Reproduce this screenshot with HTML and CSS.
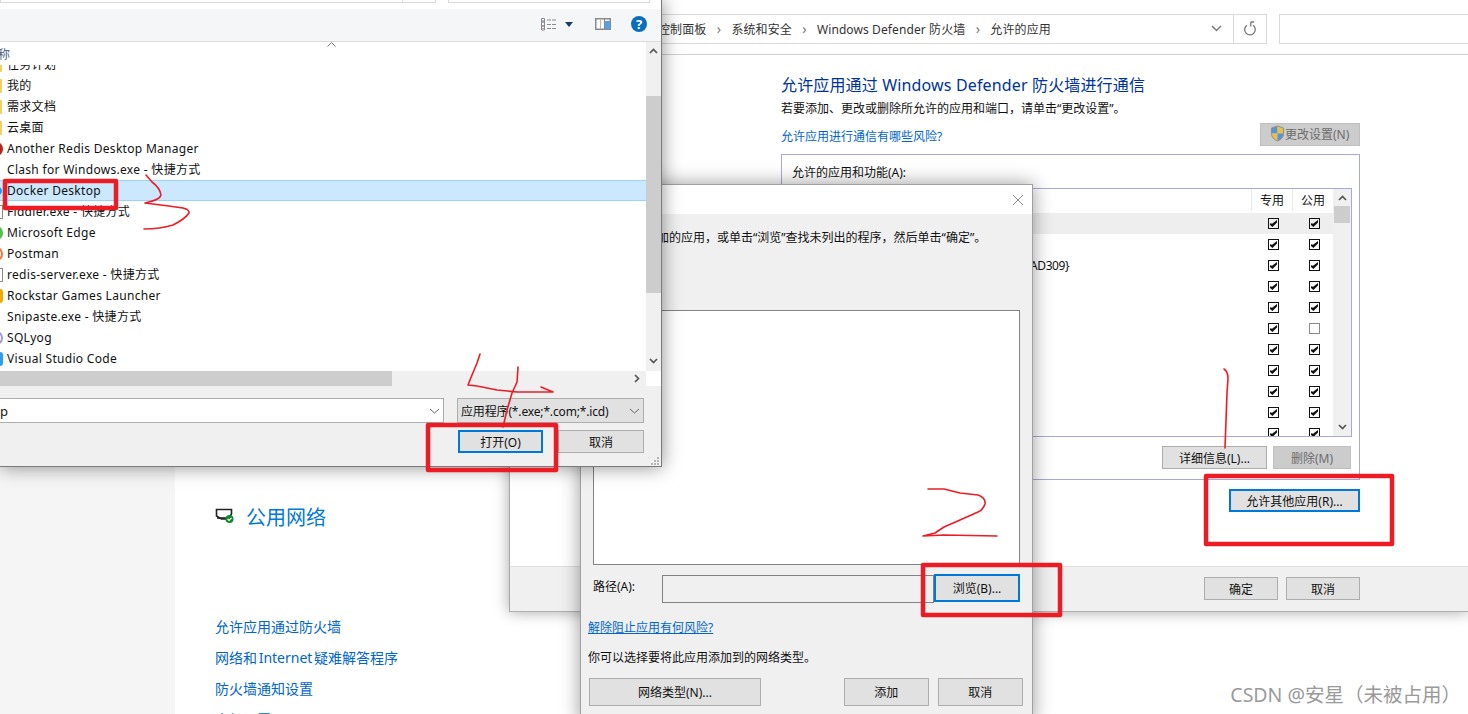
FILE: index.html
```html
<!DOCTYPE html>
<html lang="zh-CN">
<head>
  <meta charset="UTF-8">
  <title>允许的应用</title>
  <link rel="stylesheet" href="styles.css">
</head>
<body>
<div class="desktop">

  <!-- firewall page, furthest back -->
  <div class="window firewall">
    <div class="rail"></div>
    <div class="firewall-main">
      <div class="network-title">
        <svg class="network-icon" width="20" height="16" viewBox="0 0 20 16">
          <path d="M1.5 1.5h15v4.5l-3 5h-7l-5-3z" fill="#fff" stroke="#222" stroke-width="1.6"/>
          <path d="M2 10h9" stroke="#222" stroke-width="1.6"/>
          <circle cx="14.5" cy="11" r="4" fill="#12892f"/>
          <path d="M12.6 11l1.5 1.5 2.4-2.6" fill="none" stroke="#fff" stroke-width="1.2"/>
        </svg>
        <span>公用网络</span>
      </div>
      <ul class="firewall-links">
        <li>允许应用通过防火墙</li>
        <li>网络和 Internet 疑难解答程序</li>
        <li>防火墙通知设置</li>
        <li>高级设置</li>
      </ul>
    </div>
  </div>

  <!-- allowed apps window -->
  <div class="window allowed">
    <div class="addressbar">
      <div class="crumbs">
        <span>控制面板</span><i>›</i>
        <span>系统和安全</span><i>›</i>
        <span>Windows Defender 防火墙</span><i>›</i>
        <span>允许的应用</span>
        <svg class="crumbs-caret" width="11" height="7" viewBox="0 0 11 7"><path d="M1 1l4.5 4.5L10 1" fill="none" stroke="#777" stroke-width="1.4"/></svg>
        <div class="refresh">
          <svg width="14" height="16" viewBox="0 0 14 16"><path d="M4 4.2A5.3 5.3 0 1 0 10 4.2" fill="none" stroke="#777" stroke-width="1.3"/><path d="M7.8 1v4.5M7.8 1H11" fill="none" stroke="#777" stroke-width="1.3"/></svg>
        </div>
      </div>
      <div class="searchbox"></div>
    </div>

    <div class="allowed-body">
      <h2 class="allowed-title">允许应用通过 Windows Defender 防火墙进行通信</h2>
      <p class="allowed-sub">若要添加、更改或删除所允许的应用和端口，请单击“更改设置”。</p>
      <div class="risk-row">
        <a class="link risk-link">允许应用进行通信有哪些风险?</a>
        <button class="btn btn-off btn-shield">
          <svg width="15" height="17" viewBox="0 0 15 17">
            <path d="M7.5 1L1.500 3v5.500h6z" fill="#5b93cc"/>
            <path d="M7.5 1l6 2v5.500h-6z" fill="#e6bf4c"/>
            <path d="M1.500 8.500c0 3.500 2.500 6 6 7.500V8.500z" fill="#e6bf4c"/>
            <path d="M13.500 8.500c0 3.500-2.500 6-6 7.500V8.500z" fill="#5b93cc"/>
            <path d="M7.5 1L1.500 3v5.500c0 3.500 2.500 6 6 7.500 3.500-1.500 6-4 6-7.500V3z" fill="none" stroke="#8f8f8f"/>
          </svg>更改设置(N)
        </button>
      </div>
      <div class="groupbox">
        <div class="group-label">允许的应用和功能(A):</div>
        <div class="applist">
          <div class="applist-rows">
            <div class="app-head"><span class="app-name"></span><span class="app-col">专用</span><span class="app-col">公用</span></div>
            <div class="app-row app-row-hot"><span class="app-name"></span><span class="app-col"><b class="check"></b></span><span class="app-col"><b class="check"></b></span></div>
            <div class="app-row"><span class="app-name"></span><span class="app-col"><b class="check"></b></span><span class="app-col"><b class="check"></b></span></div>
            <div class="app-row"><span class="app-name">AD309}</span><span class="app-col"><b class="check"></b></span><span class="app-col"><b class="check"></b></span></div>
            <div class="app-row"><span class="app-name"></span><span class="app-col"><b class="check"></b></span><span class="app-col"><b class="check"></b></span></div>
            <div class="app-row"><span class="app-name"></span><span class="app-col"><b class="check"></b></span><span class="app-col"><b class="check"></b></span></div>
            <div class="app-row"><span class="app-name"></span><span class="app-col"><b class="check"></b></span><span class="app-col"><b class="check check-empty"></b></span></div>
            <div class="app-row"><span class="app-name"></span><span class="app-col"><b class="check"></b></span><span class="app-col"><b class="check"></b></span></div>
            <div class="app-row"><span class="app-name"></span><span class="app-col"><b class="check"></b></span><span class="app-col"><b class="check"></b></span></div>
            <div class="app-row"><span class="app-name"></span><span class="app-col"><b class="check"></b></span><span class="app-col"><b class="check"></b></span></div>
            <div class="app-row"><span class="app-name"></span><span class="app-col"><b class="check"></b></span><span class="app-col"><b class="check"></b></span></div>
            <div class="app-row"><span class="app-name"></span><span class="app-col"><b class="check"></b></span><span class="app-col"><b class="check"></b></span></div>
          </div>
          <div class="vscroll vscroll-app">
            <svg width="9" height="6" viewBox="0 0 9 6"><path d="M1 5l3.500-3.500L8 5" fill="none" stroke="#555" stroke-width="1.700"/></svg>
            <div class="thumb thumb-app"></div>
            <svg class="arrow-end" width="9" height="6" viewBox="0 0 9 6"><path d="M1 1l3.500 3.500L8 1" fill="none" stroke="#555" stroke-width="1.700"/></svg>
          </div>
        </div>
        <div class="group-actions">
          <button class="btn btn-detail">详细信息(L)...</button>
          <button class="btn btn-off btn-remove">删除(M)</button>
        </div>
      </div>
      <div class="other-row"><button class="btn btn-default btn-other">允许其他应用(R)...</button></div>
    </div>

    <div class="allowed-foot">
      <button class="btn btn-foot">确定</button>
      <button class="btn btn-foot">取消</button>
    </div>
  </div>

  <!-- add an app dialog -->
  <div class="window addapp">
    <div class="addapp-head">
      <svg width="12" height="12" viewBox="0 0 12 12"><path d="M1 1l10 10M11 1L1 11" stroke="#8c8c8c" stroke-width="1"/></svg>
    </div>
    <div class="addapp-body">
      <p class="addapp-intro">请选择要添加的应用，或单击“浏览”查找未列出的程序，然后单击“确定”。</p>
      <div class="addapp-list"></div>
      <div class="path-row">
        <label class="path-label">路径(A):</label>
        <div class="path-input"></div>
        <button class="btn btn-default btn-browse">浏览(B)...</button>
      </div>
      <a class="link link-under">解除阻止应用有何风险?</a>
      <p class="addapp-note">你可以选择要将此应用添加到的网络类型。</p>
      <div class="addapp-actions">
        <button class="btn btn-net">网络类型(N)...</button>
        <button class="btn btn-add">添加</button>
        <button class="btn btn-add">取消</button>
      </div>
    </div>
  </div>

  <!-- file open dialog, in front -->
  <div class="window opener">
    <div class="opener-top">
      <div class="opener-path"><span class="opener-path-end"></span></div>
      <div class="opener-search"></div>
    </div>
    <div class="opener-tools">
      <svg width="16" height="13" viewBox="0 0 16 13">
        <g fill="none" stroke="#8a8a8a">
          <path d="M.5 .5h3v3.500h-3zM.5 4h3v4h-3zM.5 8h3v4h-3z"/>
          <path d="M6 2h9M6 6.500h9M6 10.500h9" stroke-dasharray="4 1"/>
        </g>
        <path d="M1.500 2h1v1h-1z" fill="#4a7fc0"/>
        <path d="M1.500 10h1v1h-1z" fill="#c0392b"/>
      </svg>
      <svg class="tool-caret" width="8" height="5" viewBox="0 0 8 5"><path d="M0 0h8L4 5z" fill="#1f3a5f"/></svg>
      <svg class="tool-pane" width="16" height="12" viewBox="0 0 16 12">
        <rect x=".75" y=".75" width="14.500" height="10.500" fill="#fff" stroke="#8a8a8a" stroke-width="1.500"/>
        <path d="M5.500 1v10" stroke="#b5b5b5"/>
        <path d="M9.500 1v10" stroke="#8a8a8a"/>
        <rect x="10" y="3" width="5" height="8" fill="#4fa3e6"/>
      </svg>
      <span class="tool-help">?</span>
    </div>
    <div class="opener-main">
      <div class="opener-files">
        <div class="file-head">
          <span class="file-head-name">称</span>
          <svg class="sort-caret" width="9" height="5" viewBox="0 0 9 5"><path d="M.5 4.500l4-4 4 4" fill="none" stroke="#777"/></svg>
        </div>
        <div class="file-rows">
          <div class="file-row file-row-cut"><i class="ico ico-folder"></i>任务计划</div>
          <div class="file-row"><i class="ico ico-folder"></i>我的</div>
          <div class="file-row"><i class="ico ico-folder"></i>需求文档</div>
          <div class="file-row"><i class="ico ico-folder"></i>云桌面</div>
          <div class="file-row"><i class="ico ico-rdm"></i>Another Redis Desktop Manager</div>
          <div class="file-row"><i class="ico"></i>Clash for Windows.exe - 快捷方式</div>
          <div class="file-row file-row-on"><i class="ico ico-docker"></i>Docker Desktop</div>
          <div class="file-row"><i class="ico ico-doc"></i>Fiddler.exe - 快捷方式</div>
          <div class="file-row"><i class="ico ico-edge"></i>Microsoft Edge</div>
          <div class="file-row"><i class="ico ico-postman"></i>Postman</div>
          <div class="file-row"><i class="ico ico-doc"></i>redis-server.exe - 快捷方式</div>
          <div class="file-row"><i class="ico ico-rockstar"></i>Rockstar Games Launcher</div>
          <div class="file-row"><i class="ico"></i>Snipaste.exe - 快捷方式</div>
          <div class="file-row"><i class="ico ico-sqlyog"></i>SQLyog</div>
          <div class="file-row"><i class="ico ico-vscode"></i>Visual Studio Code</div>
        </div>
      </div>
      <div class="vscroll vscroll-files">
        <svg width="9" height="6" viewBox="0 0 9 6"><path d="M1 5l3.500-3.500L8 5" fill="none" stroke="#555" stroke-width="1.700"/></svg>
        <div class="thumb thumb-files"></div>
        <svg class="arrow-end" width="9" height="6" viewBox="0 0 9 6"><path d="M1 1l3.500 3.500L8 1" fill="none" stroke="#555" stroke-width="1.700"/></svg>
      </div>
    </div>
    <div class="hscroll-row">
      <div class="hscroll">
        <div class="hthumb"></div>
        <svg width="6" height="9" viewBox="0 0 6 9"><path d="M1 1l3.500 3.500L1 8" fill="none" stroke="#555" stroke-width="1.700"/></svg>
      </div>
    </div>
    <div class="opener-foot">
      <div class="combo-row">
        <div class="combo combo-name">p<svg width="11" height="6" viewBox="0 0 11 6"><path d="M1 1l4.500 4L10 1" fill="none" stroke="#666"/></svg></div>
        <div class="combo combo-type"><span class="combo-type-text">应用程序(*.exe;*.com;*.icd)</span><svg width="11" height="6" viewBox="0 0 11 6"><path d="M1 1l4.500 4L10 1" fill="none" stroke="#666"/></svg></div>
      </div>
      <div class="opener-actions">
        <button class="btn btn-default btn-open">打开(O)</button>
        <button class="btn btn-cancel">取消</button>
      </div>
      <svg class="grip" width="9" height="8" viewBox="0 0 9 8"><path d="M6 0h2v2H6zM3 3h2v2H3zM6 3h2v2H6zM0 6h2v2H0zM3 6h2v2H3zM6 6h2v2H6z" fill="#b5b5b5"/></svg>
    </div>
  </div>

  <!-- hand-drawn annotations on top of the screenshot -->
  <svg class="marks" width="1468" height="714" viewBox="0 0 1468 714">
    <g fill="none" stroke="#ed1c24" stroke-linejoin="round" stroke-linecap="round">
      <g stroke-width="4.500">
        <rect x="5" y="181" width="111" height="27"/>
        <rect x="428" y="425" width="128" height="45"/>
        <rect x="923" y="565" width="137" height="50"/>
        <rect x="1206" y="476" width="186" height="68"/>
      </g>
      <g stroke-width="1.600">
        <path d="M146 175L152 182Q160 188 161 195Q160 200 145 203Q170 206 183 208Q190 210 189 213Q185 219 173 225Q160 229 144 229"/>
        <path d="M480 354L477 363L472 375L468 385L477 386L497 390L517 392L553 392M541 387L553 392"/>
        <path d="M518 367L517 382L512 393L507 410L503 427"/>
        <path d="M1224 369Q1228 372 1228 378L1227 393L1226 420L1225 448"/>
        <path d="M928 489L944 489L960 493L978 495Q986 498 985 504Q983 510 978 512L960 520L944 527L935 533L923 536L944 535L997 536"/>
      </g>
    </g>
  </svg>

  <div class="watermark">CSDN @安星（未被占用）</div>
</div>
</body>
</html>
```

FILE: styles.css
```css
* {
    box-sizing: border-box;
}

body {
    margin: 0;
    font-family: "Noto Sans", "Noto Sans CJK SC", sans-serif;
    font-size: 12px;
    color: #111;
    background-color: #fff;
    overflow: hidden;
}

p, h2, ul {
    margin: 0;
    padding: 0;
}

.desktop {
    position: relative;
    width: 1468px;
    height: 714px;
    overflow: hidden;
}

.window {
    position: absolute;
    background-color: #fff;
}

.link {
    color: #0066cc;
}

.btn {
    display: block;
    padding: 0;
    font: inherit;
    color: #111;
    background-color: #e1e1e1;
    border: 1px solid #adadad;
}

.btn-default {
    border: 2px solid #0078d7;
}

.btn-off {
    color: #6d6d6d;
    background-color: #ccc;
    border-color: #bfbfbf;
}

/* firewall page */
.firewall {
    left: 0;
    top: 0;
    width: 1468px;
    height: 714px;
    display: flex;
}

.rail {
    width: 175px;
    background-color: #f5f5f5;
}

.firewall-main {
    padding: 502px 0 0 40px;
}

.network-title {
    display: flex;
    align-items: center;
    height: 28px;
    font-size: 20px;
    color: #0078d7;
}

.network-icon {
    margin-right: 11px;
}

.firewall-links {
    list-style: none;
    margin-top: 81px;
    font-size: 14px;
    line-height: 31px;
    word-spacing: -2px;
    color: #0066cc;
}

/* allowed apps */
.allowed {
    left: 509px;
    top: 0;
    width: 959px;
    height: 612px;
    display: flex;
    flex-direction: column;
    border-left: 1px solid #a8a8a8;
    box-shadow: 0 0 14px rgba(0, 0, 0, 0.35);
}

.addressbar {
    display: flex;
    height: 55px;
    padding-top: 14px;
    border-bottom: 1px solid #d0d0d0;
}

.crumbs {
    display: flex;
    align-items: center;
    width: 717px;
    height: 30px;
    margin-left: 40px;
    padding-left: 107px;
    padding-bottom: 1px;
    letter-spacing: 0.1px;
    color: #333;
    border: 1px solid #d9d9d9;
}

.crumbs i {
    width: 25px;
    font-style: normal;
    font-size: 14px;
    color: #777;
    text-align: center;
}

.crumbs-caret {
    margin-left: auto;
    margin-right: 11px;
}

.refresh {
    display: flex;
    justify-content: center;
    align-items: center;
    width: 33px;
    height: 28px;
    border-left: 1px solid #d9d9d9;
}

.searchbox {
    flex: 1;
    height: 30px;
    margin-left: 12px;
    border: 1px solid #d9d9d9;
    border-right: 0;
}

.allowed-body {
    flex: 1;
    padding: 18px 0 0 271px;
    width: 850px;
}

.allowed-title {
    font-size: 16px;
    font-weight: 400;
    line-height: 24px;
    letter-spacing: 0.15px;
    color: #003399;
}

.allowed-sub {
    margin-top: 1px;
    line-height: 22px;
}

.risk-row {
    display: flex;
    justify-content: space-between;
    height: 23px;
    margin-top: 3px;
}

.risk-link {
    line-height: 27px;
}

.btn-shield {
    display: flex;
    align-items: center;
    width: 100px;
    padding: 0 0 2px 9px;
}

.groupbox {
    height: 326px;
    margin-top: 8px;
    padding: 8px 7px 0 10px;
    border: 1px solid #a9a9d6;
}

.group-label {
    line-height: 20px;
}

.applist {
    display: flex;
    height: 249px;
    margin-top: 5px;
    border: 1px solid #a9a9d6;
}

.applist-rows {
    flex: 1;
    overflow: hidden;
}

.app-head, .app-row {
    display: flex;
    align-items: center;
    height: 21px;
}

.app-head {
    height: 24px;
    padding-bottom: 2px;
}

.app-row-hot {
    background-color: #eee;
}

.app-name {
    flex: 1;
    padding-left: 237px;
    letter-spacing: -0.4px;
}

.app-col {
    display: flex;
    justify-content: center;
    align-items: center;
    width: 41px;
    height: 100%;
}

.app-row .app-col {
    padding-left: 4px;
}

.app-head .app-col {
    border-left: 1px solid #e8e8e8;
}

.check {
    position: relative;
    display: block;
    width: 11px;
    height: 11px;
    border: 1px solid #111;
}

.check::after {
    content: "";
    position: absolute;
    left: 1px;
    top: 1px;
    width: 7px;
    height: 7px;
    background-color: #111;
    clip-path: polygon(0 45%, 30% 55%, 100% 0, 100% 35%, 35% 100%, 0 70%);
}

.check-empty {
    border-color: #8a8a8a;
}

.check-empty::after {
    display: none;
}

.vscroll {
    display: flex;
    flex-direction: column;
    align-items: center;
    background-color: #f0f0f0;
}

.arrow-end {
    margin-top: auto;
}

.thumb {
    width: 100%;
    background-color: #cdcdcd;
}

.vscroll-app {
    width: 18px;
    padding: 6px 1px 6px;
}

.thumb-app {
    height: 17px;
    margin-top: 5px;
}

.group-actions {
    display: flex;
    justify-content: flex-end;
    margin-top: 9px;
}

.btn-detail {
    width: 105px;
    height: 23px;
}

.btn-remove {
    width: 78px;
    height: 23px;
    margin-left: 6px;
    margin-right: 1px;
}

.other-row {
    display: flex;
    justify-content: flex-end;
    margin-top: 9px;
}

.btn-other {
    width: 131px;
    height: 23px;
}

.allowed-foot {
    display: flex;
    justify-content: flex-end;
    gap: 8px;
    height: 46px;
    padding: 10px 108px 0 0;
    background-color: #f0f0f0;
    border-top: 1px solid #dfdfdf;
    border-bottom: 1px solid #b0b0b0;
}

.btn-foot {
    width: 74px;
    height: 23px;
}

/* add an app */
.addapp {
    left: 580px;
    top: 184px;
    width: 453px;
    height: 540px;
    border: 1px solid #a0a0a0;
    box-shadow: 0 0 18px rgba(0, 0, 0, 0.4);
}

.addapp-head {
    display: flex;
    justify-content: flex-end;
    align-items: center;
    height: 29px;
    padding-right: 8px;
    background-color: #fff;
}

.addapp-body {
    height: 510px;
    padding: 14px 0 0 7px;
    background-color: #f0f0f0;
}

.addapp-intro {
    margin-left: 9px;
    line-height: 20px;
}

.addapp-list {
    width: 427px;
    height: 255px;
    margin: 62px 0 0 5px;
    background-color: #fff;
    border: 1px solid #828282;
}

.path-row {
    display: flex;
    margin: 9px 0 0 5px;
    height: 29px;
}

.path-label {
    width: 69px;
    line-height: 26px;
}

.path-input {
    width: 272px;
    height: 28px;
    margin-top: 1px;
    background-color: #f0f0f0;
    border: 1px solid #828282;
}

.btn-browse {
    width: 86px;
    height: 28px;
}

.link-under {
    display: block;
    margin-top: 15px;
    line-height: 20px;
    color: #0066cc;
    text-decoration: underline;
}

.addapp-note {
    margin-top: 10px;
    line-height: 20px;
}

.addapp-actions {
    display: flex;
    margin-top: 10px;
    margin-left: 1px;
}

.btn-net {
    width: 173px;
    height: 28px;
    margin-right: 83px;
}

.btn-add {
    width: 85px;
    height: 28px;
    margin-right: 9px;
}

.btn-add:last-child {
    width: 86px;
}

/* file open dialog */
.opener {
    left: 0;
    top: 0;
    width: 662px;
    height: 467px;
    display: flex;
    flex-direction: column;
    border-right: 1px solid #7a7a7a;
    border-bottom: 1px solid #7a7a7a;
    box-shadow: 0 0 18px rgba(0, 0, 0, 0.45);
}

.opener-top {
    display: flex;
    height: 9px;
}

.opener-path {
    width: 436px;
    height: 3px;
    border: 1px solid #d9d9d9;
    border-top: 0;
}

.opener-path-end {
    display: block;
    width: 33px;
    height: 2px;
    margin-left: auto;
    border-left: 1px solid #d9d9d9;
}

.opener-search {
    width: 202px;
    height: 3px;
    margin-left: 12px;
    border: 1px solid #d9d9d9;
    border-top: 0;
}

.opener-tools {
    display: flex;
    justify-content: flex-end;
    align-items: center;
    height: 33px;
    padding: 0 14px 2px 0;
    background-color: #f5f6f7;
    border-bottom: 1px solid #dcdcdc;
}

.tool-caret {
    margin: 0 22px 0 8px;
}

.tool-pane {
    margin-right: 20px;
}

.tool-help {
    width: 16px;
    height: 16px;
    font-size: 13px;
    font-weight: 700;
    line-height: 16px;
    text-align: center;
    color: #fff;
    background-color: #0a6ebd;
    border-radius: 50%;
}

.opener-main {
    display: flex;
    height: 329px;
}

.opener-files {
    flex: 1;
    display: flex;
    flex-direction: column;
    overflow: hidden;
}

.file-head {
    position: relative;
    height: 23px;
    line-height: 26px;
    color: #4c607a;
}

.file-head-name {
    margin-left: -2px;
}

.sort-caret {
    position: absolute;
    left: 327px;
    top: 0;
}

.file-rows {
    flex: 1;
    overflow: hidden;
    letter-spacing: 0.3px;
}

.file-row {
    display: flex;
    align-items: center;
    height: 21px;
    line-height: 20px;
    white-space: pre;
}

.file-row-cut {
    margin-top: -11px;
}

.file-row-on {
    background-color: #cce8ff;
    border-top: 1px solid #99d1ff;
    border-bottom: 1px solid #99d1ff;
}

.ico {
    flex: none;
    width: 13px;
    height: 14px;
    margin-left: -10px;
    margin-right: 4px;
}

.ico-folder {
    width: 12px;
    margin-right: 5px;
    background-color: #f4cf63;
    border-radius: 1px;
}

.ico-rdm {
    background-color: #b3261e;
    border-radius: 50%;
}

.ico-docker {
    width: 12px;
    height: 10px;
    margin-right: 5px;
    background-color: #2396ed;
    border-radius: 50%;
}

.ico-doc {
    background-color: #fff;
    border: 1px solid #8a8a8a;
}

.ico-edge {
    background-color: #4fc04a;
    border-radius: 50%;
}

.ico-postman {
    background-color: #fff;
    border: 2px solid #f4743b;
    border-radius: 50%;
}

.ico-rockstar {
    background-color: #f5a800;
    border-radius: 3px;
}

.ico-sqlyog {
    background-color: #fff;
    border: 2px solid #9d9bd0;
    border-radius: 50%;
}

.ico-vscode {
    background-color: #2c9cf0;
    border-radius: 3px;
}

.vscroll-files {
    width: 15px;
    margin-right: 0;
    padding: 6px 0 7px;
    height: 329px;
}

.thumb-files {
    height: 197px;
    margin-top: 42px;
}

.hscroll-row {
    display: flex;
    height: 15px;
    background-color: #fff;
}

.hscroll {
    display: flex;
    align-items: center;
    width: 646px;
    padding-right: 6px;
    background-color: #f0f0f0;
}

.hthumb {
    width: 392px;
    height: 15px;
    margin-right: auto;
    background-color: #cdcdcd;
}

.opener-foot {
    position: relative;
    flex: 1;
    padding-top: 12px;
    background-color: #f0f0f0;
}

.combo-row {
    display: flex;
    height: 25px;
}

.combo {
    display: flex;
    justify-content: space-between;
    align-items: center;
    padding-right: 3px;
    border: 1px solid #adadad;
}

.combo-name {
    width: 444px;
    font-size: 13px;
    background-color: #fff;
    border-left: 0;
}

.combo-type {
    width: 187px;
    margin-left: 13px;
    padding-left: 3px;
    background-color: #e1e1e1;
}

.combo-type-text {
    letter-spacing: -0.15px;
}

.opener-actions {
    display: flex;
    margin: 7px 0 0 458px;
}

.btn-open {
    width: 85px;
    height: 23px;
}

.btn-cancel {
    width: 86px;
    height: 23px;
    margin-left: 15px;
}

.grip {
    position: absolute;
    right: 1px;
    bottom: 1px;
}

/* overlays */
.marks {
    position: absolute;
    left: 0;
    top: 0;
}

.watermark {
    position: absolute;
    right: 7px;
    bottom: 7px;
    font-size: 19.5px;
    line-height: 24px;
    color: #9a9a9a;
    white-space: nowrap;
}
```
